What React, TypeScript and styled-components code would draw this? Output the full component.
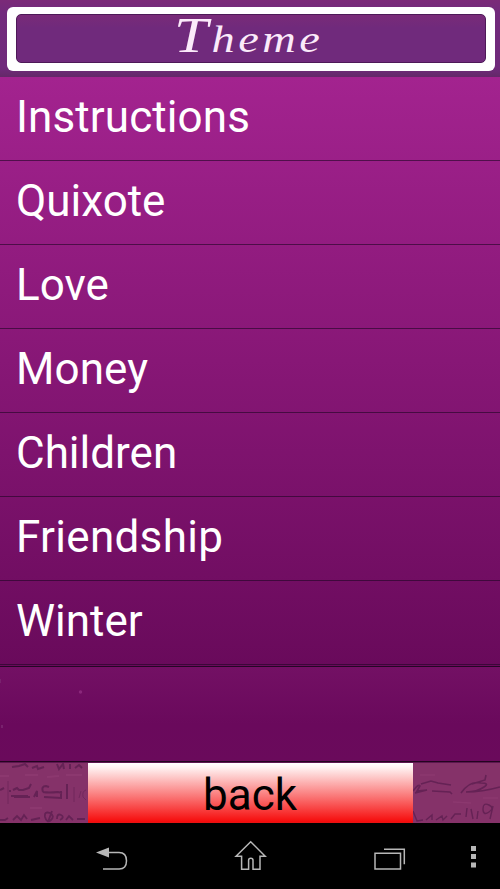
import React from "react";
import styled, { createGlobalStyle } from "styled-components";

interface ITheme {
  name: string;
  spacing: number;
}

interface IRowProps {
  $spacing: number;
}

const themes: ITheme[] = [
  { name: "Instructions", spacing: 0.1 },
  { name: "Quixote", spacing: 0 },
  { name: "Love", spacing: 0 },
  { name: "Money", spacing: 0.1 },
  { name: "Children", spacing: 0 },
  { name: "Friendship", spacing: 0.3 },
  { name: "Winter", spacing: 0 }
];

const GlobalStyle = createGlobalStyle`
  * {
    box-sizing: border-box;
  }
  body {
    margin: 0;
    background: #000;
  }
`;

const Screen = styled.div`
  width: 500px;
  height: 889px;
  display: flex;
  flex-direction: column;
  overflow: hidden;
  font-family: Roboto, sans-serif;
`;

const Header = styled.header`
  height: 77px;
  flex: none;
  padding: 7px 5px 6px 7px;
  background: linear-gradient(#7b2a78 0, #722a7c 12px, #702a7b 68px, #642868 77px);
`;

const HeaderFrame = styled.div`
  height: 64px;
  padding: 7px 9px 8px;
  border-radius: 6px;
  background: #fff;
`;

const Title = styled.h1`
  height: 49px;
  margin: 0;
  padding-left: 157px;
  border: 1px solid #4e1958;
  border-radius: 5px;
  background: linear-gradient(#792b78 0, #702a7c 13px, #702a7c 100%);
  color: #fbeafa;
  font: italic 400 38px/41px "Liberation Serif", serif;
  letter-spacing: 2.9px;
  white-space: nowrap;

  span {
    display: inline-block;
    transform: scaleX(1.22);
    transform-origin: left;
  }
  span::first-letter {
    font-size: 50px;
  }
`;

const List = styled.ul`
  height: 589px;
  flex: none;
  margin: 0;
  padding: 0;
  list-style: none;
  background: linear-gradient(#a3238f, #690a5b);
`;

const Row = styled.li<IRowProps>`
  height: 84px;
  padding-left: 16px;
  border-bottom: 1px solid rgba(30, 5, 35, 0.6);
  color: #fff;
  font-size: 44px;
  line-height: 80px;
  letter-spacing: ${props => props.$spacing}px;
  white-space: nowrap;
`;

const EmptyPanel = styled.div`
  height: 97px;
  flex: none;
  border-top: 1px solid #250626;
  border-bottom: 1px solid #5c164f;
  background: linear-gradient(#731064, #6a095c 60%, #6a0a5b);
  box-shadow: inset 0 -1px #240420;

  svg {
    display: block;
  }
`;

const Footer = styled.footer`
  height: 60px;
  flex: none;
  display: flex;
  background: #853269;
`;

const Parchment = styled.svg`
  flex: none;
  display: block;
`;

const BackButton = styled.button`
  width: 325px;
  flex: none;
  padding: 4px 1px 0 0;
  border: 0;
  background: linear-gradient(#fff 0, #fff0f0 8%, #f60b0b 98%, #df1616 100%);
  color: #000;
  font-family: Roboto, sans-serif;
  font-size: 44px;
  line-height: 56px;
`;

const NavBar = styled.nav`
  height: 66px;
  flex: none;
  background: #000;

  svg {
    display: block;
  }
`;

const App: React.FC = () => {
  return (
    <>
      <GlobalStyle />
      <Screen>
        <Header>
          <HeaderFrame>
            <Title>
              <span>Theme</span>
            </Title>
          </HeaderFrame>
        </Header>
        <List>
          {themes.map(t => (
            <Row key={t.name} $spacing={t.spacing}>
              {t.name}
            </Row>
          ))}
        </List>
        <EmptyPanel>
          <svg width="100" height="90">
            <circle cx="80.5" cy="25" r="1.7" fill="#8a287b" />
            <path d="M0 12h1v4H0M1 58h2v3H1" fill="#78226d" />
          </svg>
        </EmptyPanel>
        <Footer>
          <Parchment width="88" height="60" fill="none" stroke="#602052" strokeWidth="2" opacity=".85">
            <path d="M12 4l7-1 6-2 3 3M32 5l5-2 1 3 6-2M57 1l2 5 4-5 1 5M70 1v5M75 5l4-3 3 3" />
            <path d="M0 27l4-2M10 29v-2M13 27l4-2 2 2 4 0 6-2 2-4M11 33h17M14 34h16M34 34l3-6v6M43 29q-2-6 3-6l3 1M43 29q6 1 15 0l4 1M44 34l17 1V28M67 21v15" />
            <path d="M8 18v23M74 24v15M79 35l2-7M86 27q-4 1-3 7l3 3" strokeWidth="1" opacity=".6" />
            <path d="M0 57l5 0 3-2M13 57l4-4 4 4 3-5 3 4M31 57l9-2M45 54q-1-6 5-4 5 3 1 7t-6-3M52 48l-4 11M57 56q0-6 4-4t-1 5M66 57l3-4 4 4M77 56h8" strokeWidth="1.8" />
            <path d="M0 13h9M25 12h13M47 14l12-1M30 45h12M66 12h16" stroke="#944076" opacity=".6" />
          </Parchment>
          <BackButton>back</BackButton>
          <Parchment width="87" height="60" fill="none" stroke="#602052" strokeWidth="1.6" opacity=".85">
            <path d="M0 28q6-8 7-5l-3 5L14 27M8 21l10-3 7 2 13 2M19 28l18 1 2 2M48 30q9-13 20-10 9 0 3 4-7 5-18 5 16 0 34-5M59 21l13-4 1-5M2 30l12-3" />
            <path d="M0 48l4 10 6-1M13 57l6-5v5M23 57l6-4 1 4 4-4M38 56l4-5h6M54 45l-1 9M58 46l2 10M65 48l-1 8M70 46q0-7 6-4t0 7-6-3M80 43l-3 13" strokeWidth="1.4" />
            <path d="M7 12h15M40 39l18 1M70 35h15" stroke="#944076" opacity=".6" />
          </Parchment>
        </Footer>
        <NavBar>
          <svg width="500" height="66" fill="none" stroke="#b7b7b7" strokeWidth="1.5">
            <path d="M96 29.5l13-5v10z" fill="#b7b7b7" stroke="none" />
            <path d="M108 29.5h11q7.5 0 7.5 8.3t-7.5 8.2h-16" />
            <path d="M236 33.3l14.7-14.6 14.5 14.6h-5.2v13h-7v-9q0-2-2.2-2t-2.2 2v9h-7v-13z" />
            <path d="M375 30.3h25.5v15.8H375zM384 26.2h20.3v15" />
            <path d="M471 23h5v5h-5zM471 31h5v5h-5zM471 39.5h5v5h-5z" fill="#b7b7b7" stroke="none" />
          </svg>
        </NavBar>
      </Screen>
    </>
  );
};

export default App;
